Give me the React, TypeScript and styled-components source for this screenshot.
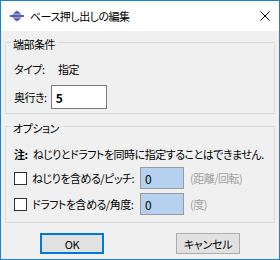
import * as React from "react";
import styled, { createGlobalStyle } from "styled-components";

const GlobalStyle = createGlobalStyle`
  html, body {
    margin: 0;
    padding: 0;
    background: #fff;
  }
  body {
    font-family: "Noto Sans CJK JP", "Noto Sans", sans-serif;
    font-size: 11px;
    font-feature-settings: "palt" 1;
    letter-spacing: -0.5px;
    color: #000;
    white-space: nowrap;
  }
`;

const Window = styled.div`
  width: 280px;
  height: 260px;
  box-sizing: border-box;
  border: 1px solid #1883d7;
  display: flex;
  flex-direction: column;
  background: #f0f0f0;
`;

const TitleBar = styled.div`
  height: 30px;
  flex: none;
  background: #fff;
  display: flex;
  align-items: center;
  gap: 6px;
  padding: 0 9px;
`;

const TitleText = styled.span`
  font-size: 11px;
  line-height: 14px;
`;

const CloseBox = styled.span`
  margin-left: auto;
  display: flex;
`;

const Body = styled.div`
  flex: 1;
  display: flex;
  flex-direction: column;
  padding: 0 4px;
`;

const Group = styled.fieldset<{ $top: number; $pad: number; $bottom: number }>`
  margin: ${(p) => p.$top}px 0 0;
  padding: ${(p) => p.$pad}px 8px ${(p) => p.$bottom}px;
  border: 1px solid #dcdcdc;
  min-width: 0;
`;

const Legend = styled.legend`
  margin-left: -3px;
  padding: 4px 2px 0;
  line-height: 12px;
`;

const Row = styled.div<{ $h: number; $top?: number }>`
  display: flex;
  align-items: center;
  height: ${(p) => p.$h}px;
  margin-top: ${(p) => p.$top ?? 0}px;
`;

const FieldLabel = styled.span<{ $w?: number }>`
  width: ${(p) => (p.$w ? `${p.$w}px` : "auto")};
  flex: none;
`;

const TextBox = styled.div<{
  $w: number;
  $h: number;
  $fill: string;
  $edge: string;
  $gap?: number;
  $bold?: boolean;
}>`
  box-sizing: border-box;
  width: ${(p) => p.$w}px;
  height: ${(p) => p.$h}px;
  margin-left: ${(p) => p.$gap ?? 0}px;
  border: 1px solid ${(p) => p.$edge};
  background: ${(p) => p.$fill};
  display: flex;
  align-items: center;
  padding-left: 4px;
  font-weight: ${(p) => (p.$bold ? 600 : 400)};
  font-size: 12px;
  letter-spacing: 0;
`;

const Note = styled.div`
  height: 16px;
  display: flex;
  align-items: center;
`;

const NoteMark = styled.span`
  font-weight: 700;
  margin-right: 5px;
`;

const OptionGrid = styled.div`
  display: grid;
  grid-template-columns: 120px 44px auto;
  grid-auto-rows: 22px;
  column-gap: 6px;
  row-gap: 4px;
  margin-top: 5px;
  align-items: center;
`;

const CheckLabel = styled.label`
  display: flex;
  align-items: center;
  gap: 5px;
`;

const CheckBox = styled.span`
  box-sizing: border-box;
  width: 13px;
  height: 13px;
  border: 1px solid #333;
  background: #fff;
  flex: none;
`;

const Hint = styled.span`
  color: #a0a0a0;
`;

const ButtonRow = styled.div`
  display: flex;
  gap: 72px;
  margin-top: 10px;
  padding-left: 35px;
`;

const Button = styled.button<{ $focus?: boolean }>`
  box-sizing: border-box;
  width: 64px;
  height: 21px;
  padding: 0;
  background: #e1e1e1;
  border: ${(p) => (p.$focus ? "2px solid #0078d7" : "1px solid #adadad")};
  font-family: inherit;
  font-size: 11px;
  font-feature-settings: "palt" 1;
  letter-spacing: -0.3px;
  color: #000;
`;

const ExtrudeIcon = () => (
  <svg width="14" height="12" viewBox="0 0 14 12">
    <defs>
      <linearGradient id="ex" x1="0" y1="0" x2="0" y2="1">
        <stop offset="0" stopColor="#b4b6e2" />
        <stop offset="0.5" stopColor="#4e529f" />
        <stop offset="1" stopColor="#b4b6e2" />
      </linearGradient>
    </defs>
    <polygon points="7,0 12,5 2,5" fill="url(#ex)" />
    <rect x="0" y="5" width="14" height="2" fill="#5a5ea8" />
    <polygon points="2,7 12,7 7,12" fill="url(#ex)" />
  </svg>
);

const CloseIcon = () => (
  <svg width="10" height="10" viewBox="0 0 10 10">
    <path d="M0.5 0.5 L9.5 9.5 M9.5 0.5 L0.5 9.5" stroke="#000" strokeWidth="1" fill="none" />
  </svg>
);

export default function App() {
  return (
    <>
      <GlobalStyle />
      <Window>
        <TitleBar>
          <ExtrudeIcon />
          <TitleText>ベース押し出しの編集</TitleText>
          <CloseBox>
            <CloseIcon />
          </CloseBox>
        </TitleBar>
        <Body>
          <Group $top={3} $pad={9} $bottom={4}>
            <Legend>端部条件</Legend>
            <Row $h={20}>
              <FieldLabel $w={44}>タイプ:</FieldLabel>
              <span>指定</span>
            </Row>
            <Row $h={24} $top={6}>
              <FieldLabel>奥行き:</FieldLabel>
              <TextBox $w={56} $h={24} $fill="#fff" $edge="#7a7a7a" $gap={4} $bold>
                5
              </TextBox>
            </Row>
          </Group>
          <Group $top={4} $pad={12} $bottom={7}>
            <Legend>オプション</Legend>
            <Note>
              <NoteMark>注:</NoteMark>
              ねじりとドラフトを同時に指定することはできません.
            </Note>
            <OptionGrid>
              <CheckLabel>
                <CheckBox />
                ねじりを含める/ピッチ:
              </CheckLabel>
              <TextBox $w={44} $h={22} $fill="#b5d1ef" $edge="#9a9a9a">
                0
              </TextBox>
              <Hint>(距離/回転)</Hint>
              <CheckLabel>
                <CheckBox />
                ドラフトを含める/角度:
              </CheckLabel>
              <TextBox $w={44} $h={22} $fill="#b5d1ef" $edge="#9a9a9a">
                0
              </TextBox>
              <Hint>(度)</Hint>
            </OptionGrid>
          </Group>
          <ButtonRow>
            <Button $focus>OK</Button>
            <Button>キャンセル</Button>
          </ButtonRow>
        </Body>
      </Window>
    </>
  );
}
